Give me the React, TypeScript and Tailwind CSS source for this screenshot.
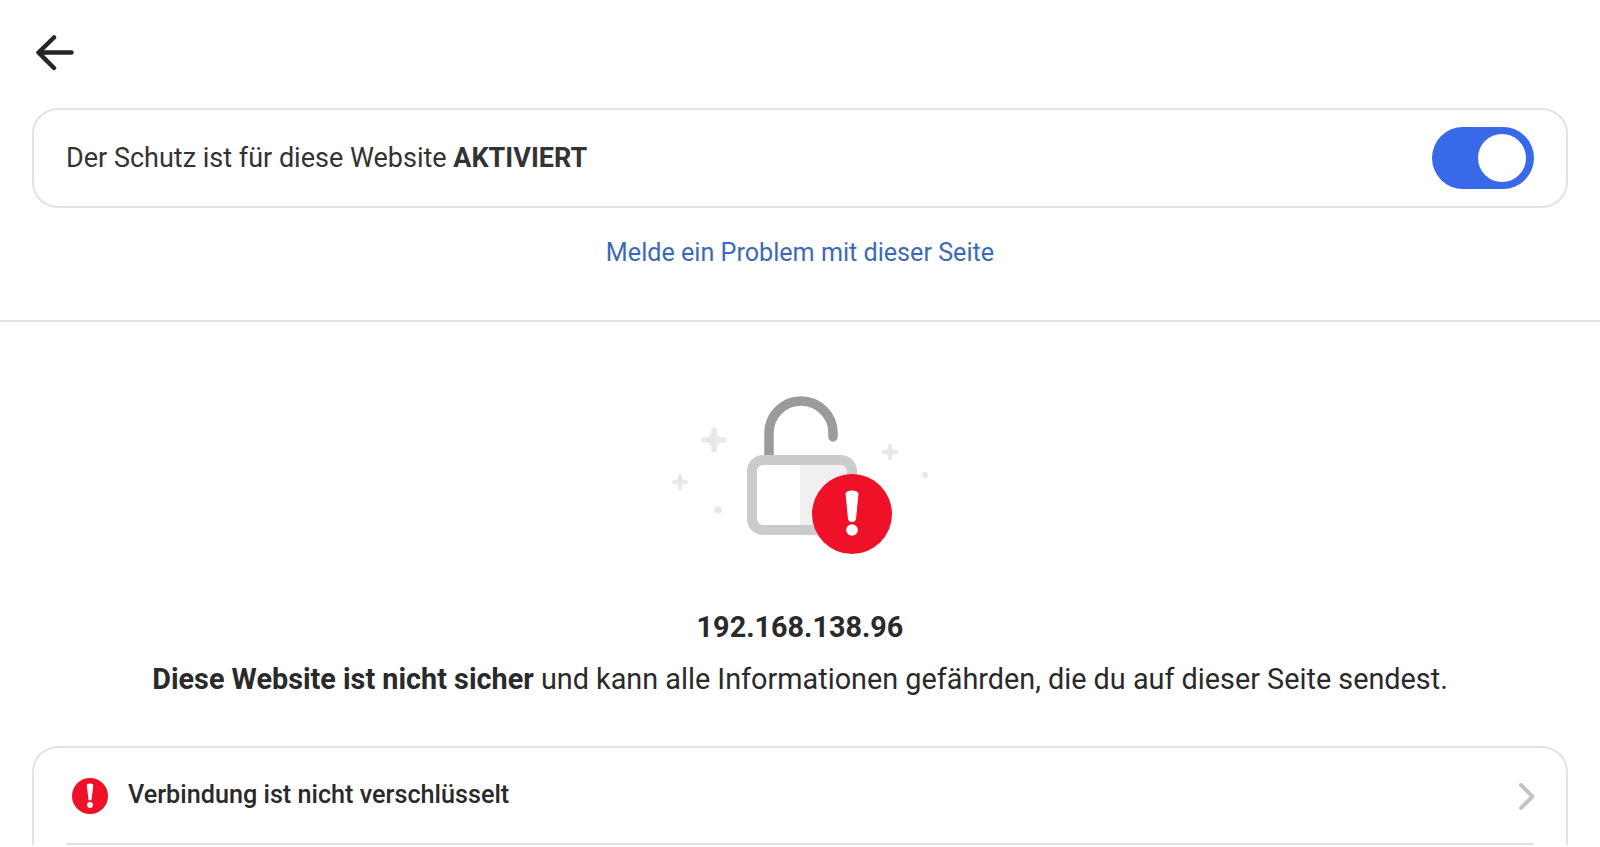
const roboto = "font-[Roboto,sans-serif]";

function Sparkle({ x, y, r }: { x: number; y: number; r: number }) {
  const d = r * 0.55;
  return (
    <g fill="#e8e8e8" stroke="#e8e8e8" strokeLinecap="round" strokeLinejoin="round">
      <path d={`M${x} ${y - r + 1}V${y + r - 1}M${x - r + 1} ${y}H${x + r - 1}`} strokeWidth={r * 0.5} />
      <path d={`M${x} ${y - d}L${x + d} ${y}L${x} ${y + d}L${x - d} ${y}Z`} strokeWidth={r * 0.3} />
    </g>
  );
}

function LockArt() {
  return (
    <svg width="310" height="200" viewBox="5 0 310 200" fill="none">
      <Sparkle x={74} y={70} r={11} />
      <Sparkle x={250} y={82} r={7.5} />
      <Sparkle x={40} y={112} r={7.5} />
      <circle cx="78" cy="140" r="3.8" fill="#e8e8e8" />
      <circle cx="285" cy="105" r="3" fill="#e8e8e8" />
      <path d="M129 86V63a32 32 0 0 1 64 0v4" stroke="#9b9b9b" strokeWidth="9.5" strokeLinecap="round" />
      <path d="M160 90h40a12 12 0 0 1 12 12v58h-52z" fill="#f0f0f0" />
      <rect x="112" y="90" width="100" height="70" rx="11" stroke="#cbcbcb" strokeWidth="10" />
      <circle cx="212" cy="144" r="40" fill="#ee1127" />
      <path d="M206 123.500a6 2.500 0 0 1 12 0L215.500 149a3.500 2.500 0 0 1 -7 0z" fill="#fff" stroke="#fff" strokeWidth="1" strokeLinejoin="round" />
      <circle cx="212" cy="160" r="5.800" fill="#fff" />
    </svg>
  );
}

function AlertDot() {
  return (
    <svg width="36" height="36" viewBox="0 0 36 36" className="shrink-0">
      <circle cx="18" cy="18" r="18" fill="#ee1127" />
      <path d="M14.700 7.500a3.300 2 0 0 1 6.600 0L19.600 21a1.600 1.600 0 0 1 -3.200 0z" fill="#fff" />
      <circle cx="18" cy="27" r="2.900" fill="#fff" />
    </svg>
  );
}

export default function App() {
  return (
    <div className={`${roboto} h-[847px] overflow-hidden bg-white text-[#2a2a2a]`}>
      <div className="flex h-[108px] items-start pt-[35px] pl-[36px]">
        <svg width="38" height="36" viewBox="0 0 38 36" fill="none">
          <path
            d="M35.500 17.500H3M18 2.500 2.500 17.500 18 33"
            stroke="#262626"
            strokeWidth="4.500"
            strokeLinecap="round"
            strokeLinejoin="round"
          />
        </svg>
      </div>

      <div className="mx-[32px] flex h-[100px] items-center justify-between rounded-[26px] border-2 border-[#e2e2e2] pr-[32px] pl-[32px]">
        <p className="text-[27px] leading-none text-[#333333]">
          Der Schutz ist für diese Website <b className="font-bold">AKTIVIERT</b>
        </p>
        <div className="flex h-[62px] w-[102px] items-center justify-end rounded-full bg-[#3869e8] pr-[8px]">
          <div className="size-[48px] rounded-full bg-white" />
        </div>
      </div>

      <div className="flex h-[114px] items-start justify-center border-b-2 border-[#e2e2e2] pt-[29px]">
        <a className="text-[25.150px] leading-[32px] text-[#3d6ab8]">Melde ein Problem mit dieser Seite</a>
      </div>

      <div className="flex justify-center pt-[48px]">
        <LockArt />
      </div>

      <p className="mt-[40px] text-center text-[28.800px] leading-[34px] font-bold">192.168.138.96</p>
      <p className="mt-[17px] text-center text-[28.800px] leading-[36px]">
        <b className="font-bold">Diese Website ist nicht sicher</b> und kann alle Informationen gefährden, die du auf dieser Seite sendest.
      </p>

      <div className="mx-[32px] mt-[49px] rounded-t-[26px] border-x-2 border-t-2 border-[#e2e2e2] px-[32px]">
        <div className="flex h-[97px] items-center justify-between border-b-2 border-[#e2e2e2] pt-[1px]">
          <div className="flex items-center gap-[20px] pl-[6px]">
            <AlertDot />
            <span className="mb-[3px] text-[25.200px] font-medium">Verbindung ist nicht verschlüsselt</span>
          </div>
          <svg width="16" height="27" viewBox="0 0 16 27" fill="none" className="mr-[-1px]">
            <path d="M2 2l11.500 11.500L2 25" stroke="#c4c4c4" strokeWidth="4" strokeLinecap="round" strokeLinejoin="round" />
          </svg>
        </div>
      </div>
    </div>
  );
}
